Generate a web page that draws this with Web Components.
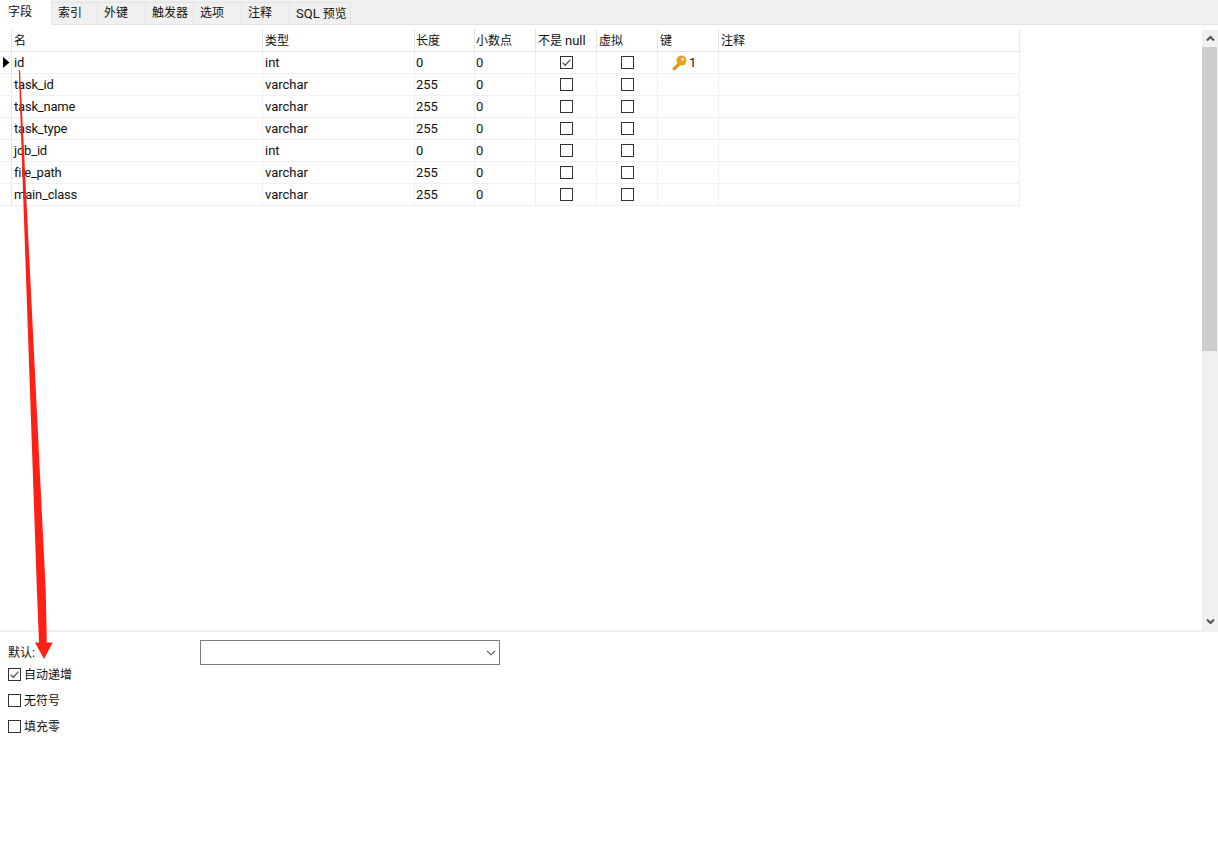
<!DOCTYPE html>
<html lang="zh">
<head>
<meta charset="utf-8">
<title>字段</title>
<style>
  html, body { margin: 0; background: #fff; }
  body { font: 13px/18px Roboto, "Noto Sans CJK SC", sans-serif; color: #111; }
</style>
</head>
<body>
<table-designer></table-designer>

<script>
const CHECK = `<svg viewBox="0 0 13 13" width="13" height="13"><rect x=".5" y=".5" width="12" height="12" fill="#fff" stroke="#333"/><path d="M2.6 6.6 5.2 9.2 10.4 3.6" fill="none" stroke="#555" stroke-width="1.3"/></svg>`
const UNCHECK = `<svg viewBox="0 0 13 13" width="13" height="13"><rect x=".5" y=".5" width="12" height="12" fill="#fff" stroke="#333"/></svg>`

class NvTabs extends HTMLElement {
  constructor() {
    super()
    this.attachShadow({ mode: 'open' })
    const tabs = [['字段', 52], ['索引', 46], ['外键', 48], ['触发器', 48], ['选项', 48], ['注释', 48], ['<span>SQL</span> 预览', 61]]
    this.shadowRoot.innerHTML = `
      <style>
        :host { display: flex; height: 25px; box-sizing: border-box; background: #f0f0f0; border-bottom: 1px solid #e3e3e3; align-items: flex-end; }
        div { box-sizing: border-box; height: 22px; padding-left: 6px; background: #f0f0f0; border: 1px solid #e3e3e3; border-left: 0; border-bottom: 0; font-size: 12px; line-height: 21px; white-space: nowrap; }
        div:nth-child(2) { padding-left: 4px; }
        div.on { height: 25px; padding-left: 8px; margin-bottom: -1px; background: #fff; border: 0; border-right: 1px solid #e3e3e3; line-height: 25px; }
        span { font-size: 13px; }
      </style>
      ${tabs.map(([t, w], i) => `<div class="${i ? '' : 'on'}" style="width:${w}px">${t}</div>`).join('')}
    `
  }
}

class NvGrid extends HTMLElement {
  constructor() {
    super()
    this.attachShadow({ mode: 'open' })
    const cols = '12px 251px 152px 60px 61px 61px 61px 61px 301px'
    const head = ['', '名', '类型', '长度', '小数点', '不是 <span>null</span>', '虚拟', '键', '注释']
    const rows = [
      ['id', 'int', '0', '0', 1, 0, 1],
      ['task_id', 'varchar', '255', '0', 0, 0, 0],
      ['task_name', 'varchar', '255', '0', 0, 0, 0],
      ['task_type', 'varchar', '255', '0', 0, 0, 0],
      ['job_id', 'int', '0', '0', 0, 0, 0],
      ['file_path', 'varchar', '255', '0', 0, 0, 0],
      ['main_class', 'varchar', '255', '0', 0, 0, 0],
    ]
    const key = `<span class="key"><svg viewBox="0 0 16 16" width="16" height="16"><path d="M7.4 7.2 1.6 13v2h2.6l5.6-5.4z" fill="#dd9412"/><circle cx="10.4" cy="5.6" r="5" fill="#e8a11c"/><path d="M6.4 8.6 2.2 12.8" stroke="#f6c75a" stroke-width=".8"/><circle cx="11.6" cy="4.2" r="1.5" fill="#fdf3d6"/></svg>1</span>`
    const row = (r, i) => `
      <div class="row">
        <div class="cell mark">${i ? '' : '<svg viewBox="0 0 7 11" width="7" height="11"><path d="M0 0 6.5 5.5 0 11z" fill="#000"/></svg>'}</div>
        <div class="cell name">${r[0]}</div><div class="cell">${r[1]}</div><div class="cell">${r[2]}</div><div class="cell">${r[3]}</div>
        <div class="cell mid">${r[4] ? CHECK : UNCHECK}</div>
        <div class="cell mid">${r[5] ? CHECK : UNCHECK}</div>
        <div class="cell">${r[6] ? key : ''}</div>
        <div class="cell"></div>
      </div>`
    this.shadowRoot.innerHTML = `
      <style>
        :host { display: block; flex: 1; padding-top: 4px; background: #fff; }
        .row { display: grid; grid-template-columns: ${cols}; width: 1020px; height: 22px; box-sizing: border-box; border-bottom: 1px solid #f0f0f0; }
        .row.head { height: 23px; border-bottom: 1px solid #e2e2e2; }
        .cell { box-sizing: border-box; border-right: 1px solid #f0f0f0; padding-left: 2px; line-height: 21px; white-space: nowrap; overflow: hidden; }
        .cell:nth-child(4), .cell:nth-child(5) { padding-left: 1px; }
        .name { letter-spacing: -.2px; }
        .head .cell { border-right-color: #e6e6e6; font-size: 12px; line-height: 24px; }
        .head span { font-size: 13px; }
        .mark { padding: 5px 0 0 3px; background: #fff; border-right-color: #e6e6e6; }
        .mark svg { display: block; }
        .mid { display: flex; justify-content: center; align-items: center; padding: 0 0 1px; }
        .key { display: flex; align-items: center; gap: 2px; padding-left: 11px; height: 21px; }
      </style>
      <div class="row head">${head.map(h => `<div class="cell">${h}</div>`).join('')}</div>
      ${rows.map(row).join('')}
    `
  }
}

class NvScrollbar extends HTMLElement {
  constructor() {
    super()
    this.attachShadow({ mode: 'open' })
    this.shadowRoot.innerHTML = `
      <style>
        :host { display: flex; flex-direction: column; width: 16px; margin: 5px 0 0; background: #f0f0f0; }
        .btn { height: 17px; display: flex; align-items: center; justify-content: center; }
        .thumb { height: 304px; background: #cdcdcd; margin-right: 1px; }
        .track { flex: 1; }
      </style>
      <div class="btn"><svg viewBox="0 0 9 7" width="9" height="7"><path d="M1 5.5 4.5 2 8 5.5" fill="none" stroke="#505050" stroke-width="2"/></svg></div>
      <div class="thumb"></div>
      <div class="track"></div>
      <div class="btn"><svg viewBox="0 0 9 7" width="9" height="7"><path d="M1 1.5 4.5 5 8 1.5" fill="none" stroke="#505050" stroke-width="2"/></svg></div>
    `
  }
}

class NvCheck extends HTMLElement {
  constructor() {
    super()
    this.attachShadow({ mode: 'open' })
    this.shadowRoot.innerHTML = `
      <style>
        :host { display: flex; align-items: center; gap: 3px; height: 26px; font-size: 12px; }
        svg { display: block; margin-bottom: 1px; }
      </style>
      ${this.hasAttribute('checked') ? CHECK : UNCHECK}<slot></slot>
    `
  }
}

class NvSelect extends HTMLElement {
  constructor() {
    super()
    this.attachShadow({ mode: 'open' })
    this.shadowRoot.innerHTML = `
      <style>
        :host { display: flex; align-items: center; justify-content: flex-end; box-sizing: border-box; width: 300px; height: 25px; padding-right: 3px; border: 1px solid #7a7a7a; background: #fff; }
      </style>
      <svg viewBox="0 0 10 6" width="10" height="6"><path d="M1 .8 5 4.8 9 .8" fill="none" stroke="#555" stroke-width="1.1"/></svg>
    `
  }
}

class NvOptions extends HTMLElement {
  constructor() {
    super()
    this.attachShadow({ mode: 'open' })
    this.shadowRoot.innerHTML = `
      <style>
        :host { display: block; flex: 1; border-top: 2px solid #f0f0f0; padding: 8px 0 0 8px; font-size: 12px; }
        .def { display: flex; align-items: center; height: 25px; margin-bottom: -3px; }
        label { width: 192px; padding-top: 1px; }
      </style>
      <div class="def"><label>默认:</label><nv-select></nv-select></div>
      <nv-check checked>自动递增</nv-check>
      <nv-check>无符号</nv-check>
      <nv-check>填充零</nv-check>
    `
  }
}

// red annotation, drawn on top of the whole window
class NvArrow extends HTMLElement {
  constructor() {
    super()
    this.attachShadow({ mode: 'open' })
    this.shadowRoot.innerHTML = `
      <style>
        :host { position: absolute; left: 0; top: 0; width: 100px; height: 700px; pointer-events: none; }
        svg { display: block; }
      </style>
      <svg viewBox="0 0 100 700" width="100" height="700">
        <path d="M18.8 70 20 70 45.7 590 46.8 642.5 52.7 642.5 44 659 35 642.5 39 642.5 36.9 590z" fill="#ff1f14"/>
      </svg>
    `
  }
}

class TableDesigner extends HTMLElement {
  constructor() {
    super()
    this.attachShadow({ mode: 'open' })
    this.shadowRoot.innerHTML = `
      <style>
        :host { display: flex; flex-direction: column; position: relative; height: 857px; overflow: hidden; }
        .main { display: flex; height: 605px; }
      </style>
      <nv-tabs></nv-tabs>
      <div class="main"><nv-grid></nv-grid><nv-scrollbar></nv-scrollbar></div>
      <nv-options></nv-options>
      <nv-arrow></nv-arrow>
    `
  }
}

customElements.define('nv-tabs', NvTabs)
customElements.define('nv-grid', NvGrid)
customElements.define('nv-scrollbar', NvScrollbar)
customElements.define('nv-check', NvCheck)
customElements.define('nv-select', NvSelect)
customElements.define('nv-options', NvOptions)
customElements.define('nv-arrow', NvArrow)
customElements.define('table-designer', TableDesigner)
</script>
</body>
</html>
